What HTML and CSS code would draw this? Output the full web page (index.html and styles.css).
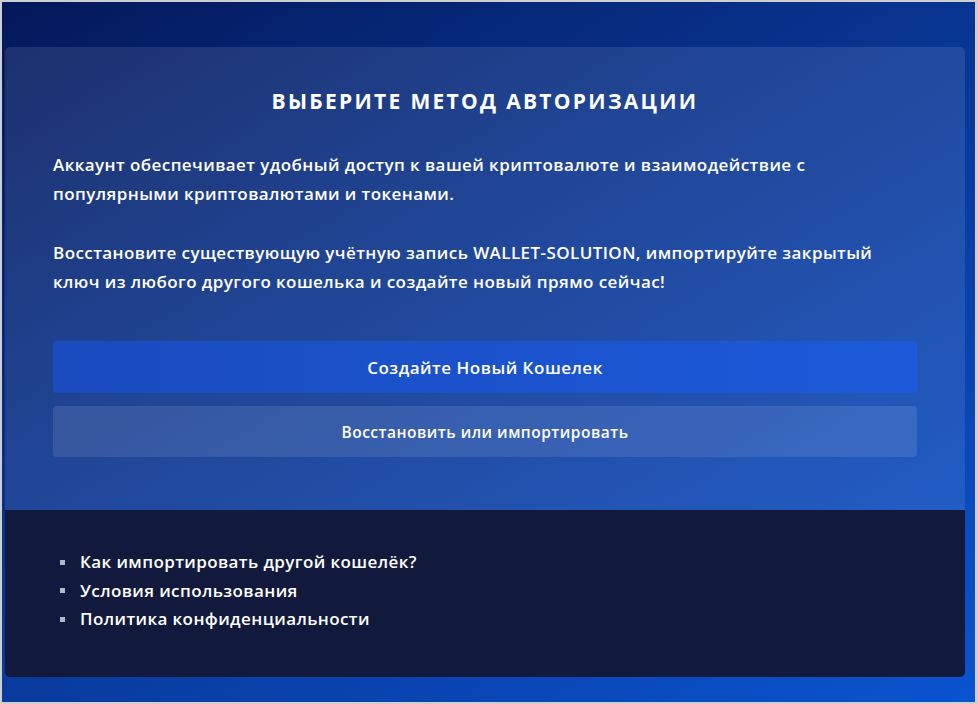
FILE: index.html
```html
<!DOCTYPE html>
<html lang="ru">
<head>
<meta charset="utf-8">
<title>Выберите метод авторизации</title>
<link rel="stylesheet" href="styles.css">
</head>
<body>
<div class="frame">
  <div class="page">
    <div class="card">
      <div class="card-main">
        <h1 class="title">ВЫБЕРИТЕ МЕТОД АВТОРИЗАЦИИ</h1>
        <p class="text first">Аккаунт обеспечивает удобный доступ к вашей криптовалюте и взаимодействие с популярными криптовалютами и токенами.</p>
        <p class="text second">Восстановите существующую учётную запись WALLET-SOLUTION, импортируйте закрытый ключ из любого другого кошелька и создайте новый прямо сейчас!</p>
        <div class="actions">
          <button class="btn btn-primary">Создайте Новый Кошелек</button>
          <button class="btn btn-secondary">Восстановить или импортировать</button>
        </div>
      </div>
      <div class="card-footer">
        <ul class="links">
          <li>Как импортировать другой кошелёк?</li>
          <li>Условия использования</li>
          <li>Политика конфиденциальности</li>
        </ul>
      </div>
    </div>
  </div>
</div>
</body>
</html>
```

FILE: styles.css
```css
* { box-sizing: border-box; }
html, body { margin: 0; padding: 0; background: #cfcfd2; }
body { font-family: "Open Sans", "Noto Sans", sans-serif; color: #fff; }

.frame {
  width: 978px;
  height: 704px;
  border-style: solid;
  border-color: #cfcfd2;
  border-width: 2px 3px 2px 2px;
}

.page {
  height: 100%;
  background: linear-gradient(150deg, #03185a 0%, #072f86 35%, #0a45b4 75%, #0a54d0 100%);
  padding: 45px 10px 0 3px;
}

.card {
  width: 960px;
  border-radius: 5px;
  overflow: hidden;
}

.card-main {
  height: 463px;
  background: rgba(255, 255, 255, 0.1);
  padding: 40px 48px 0 48px;
}

.title {
  margin: 0;
  font-size: 21px;
  line-height: 28px;
  font-weight: 700;
  text-align: center;
  letter-spacing: 2.3px;
}

.text {
  margin: 0;
  font-size: 17px;
  line-height: 28.5px;
  font-weight: 600;
  letter-spacing: 0.42px;
}
.text.first { margin-top: 36px; }
.text.second { margin-top: 31px; }

.actions {
  margin-top: 45px;
  display: flex;
  flex-direction: column;
  gap: 13px;
}

.btn {
  border: 0;
  border-radius: 4px;
  color: #fff;
  font-family: inherit;
  width: 100%;
  cursor: pointer;
  font-weight: 600;
  letter-spacing: 0.5px;
}
.btn-primary {
  height: 52px;
  font-size: 17px;
  background: linear-gradient(90deg, #1a4bbf 0%, #1c5ad9 100%);
}
.btn-secondary {
  height: 51px;
  font-size: 15.5px;
  background: rgba(255, 255, 255, 0.1);
}

.card-footer {
  height: 167px;
  background: #111a3c;
  padding: 38px 48px 0 55px;
}

.links {
  list-style: none;
  margin: 0;
  padding: 0;
}
.links li {
  font-size: 17px;
  line-height: 28.5px;
  display: flex;
  align-items: center;
  font-weight: 600;
  letter-spacing: 0.4px;
}
.links li::before {
  content: "";
  width: 5px;
  height: 5px;
  background: #b4b8c4;
  margin-right: 15px;
}
```
